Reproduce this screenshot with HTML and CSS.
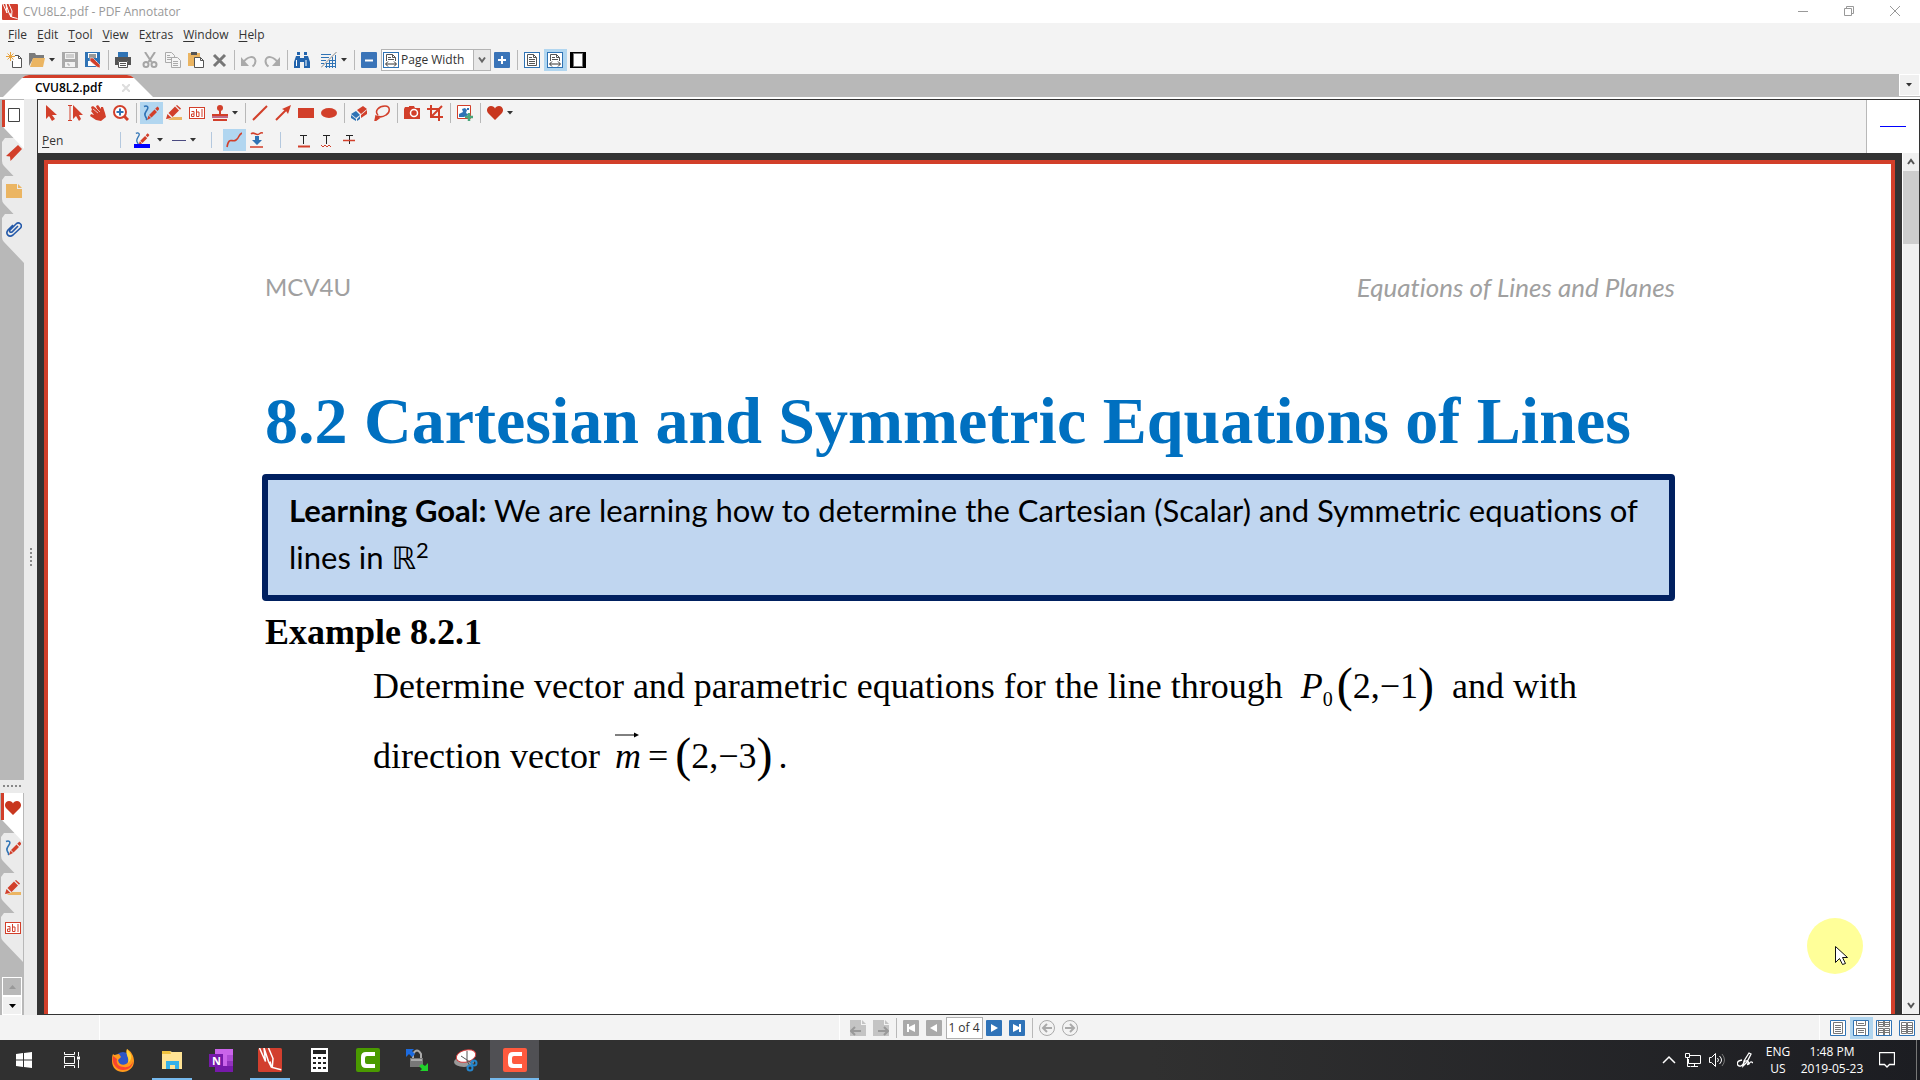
FILE: index.html
```html
<!DOCTYPE html>
<html lang="en">
<head>
    <meta charset="UTF-8">
    <meta name="viewport" content="width=device-width, initial-scale=1.0">
    <title>CVU8L2.pdf - PDF Annotator</title>
    <link rel="stylesheet" href="styles.css">
</head>
<body>

    <!-- Shared icons -->
    <svg class="sprite" aria-hidden="true">
        <symbol id="i-pen" viewBox="0 0 16 16">
            <path d="M1 1.500C4 0 6 2 4 5S1 9 2.500 11.500S4 14 3 15" fill="none" stroke="#2f73b5" stroke-width="1.500"/>
            <path d="M4 15l1.500-4.500 2.500 2.500z M6 10l5.500-5.500 2.500 2.500-5.500 5.500z M12.200 3.800l2.300-2.300 2 2-2 2.500z" fill="#d23f2a"/>
        </symbol>
        <symbol id="i-marker" viewBox="0 0 16 16">
            <path d="M7 12h9v3H2z" fill="#ebb562"/>
            <path d="M0 14l1.500-5 4 4z M2.500 8l6.500-6.500 4 4L6.500 12z M10 .8l1-.8 4 3.500-1 1.300z" fill="#d23f2a"/>
        </symbol>
        <symbol id="i-text" viewBox="0 0 16 16">
            <rect x=".5" y="2.500" width="15" height="11" fill="#fff" stroke="#d23f2a"/>
            <path d="M2.500 6.500h2.500v5h-2.500v-2.500h2.500M7.500 4v7.500h2.500v-4.500h-2.500M13 4v8" fill="none" stroke="#d23f2a"/>
        </symbol>
        <symbol id="i-heart" viewBox="0 0 16 16">
            <path d="M8 15L1 8C-1.500 4.500 1 1 4 1c2 0 3.500 1 4 2.500C8.500 2 10 1 12 1c3 0 5.500 3.500 3 7z" fill="#c8371f"/>
        </symbol>
        <symbol id="i-width" viewBox="0 0 16 16">
            <rect x=".5" y=".5" width="15" height="15" fill="#fff" stroke="#2f73b5"/>
            <path d="M3.500 9V2.500h6l3 3V9M9.500 2.500v3h3M5 5.500h3M5 7.500h6" fill="none" stroke="#555"/>
            <path d="M3 12h10M5 9.500L2.500 12 5 14.500M11 9.500l2.500 2.500-2.500 2.500" fill="none" stroke="#333"/>
        </symbol>
        <symbol id="i-caret" viewBox="0 0 7 4">
            <path d="M0 0h6L3 3.500z" fill="#333"/>
        </symbol>
        <symbol id="i-pdf" viewBox="0 0 16 16">
            <rect width="16" height="16" rx="1" fill="#d23f2e"/>
            <path d="M1 0l4 9L4 0l3 9 2 4-1-4M7 0l3 7-.5 6 6 1.500" fill="none" stroke="#fff" stroke-width="1"/>
        </symbol>
        <symbol id="i-camtasia" viewBox="0 0 24 24">
            <path d="M19 4h-9q-5 0-5 5v6q0 5 5 5h9v-4h-8q-2 0-2-2v-4q0-2 2-2h8z" fill="#fff"/>
        </symbol>
        <symbol id="i-tab" viewBox="0 0 24 50">
            <path d="M2 4L5 0H24V49L4 28Q2 26 2 23Z"/>
        </symbol>
    </svg>

    <header class="title-bar">
        <svg class="icon"><use href="#i-pdf"/></svg>
        <span class="title-text">CVU8L2.pdf - PDF Annotator</span>
        <button class="window-button" aria-label="Minimize"><svg class="icon-small" viewBox="0 0 10 10"><path d="M0 5.500h10"/></svg></button>
        <button class="window-button" aria-label="Restore"><svg class="icon-small" viewBox="0 0 10 10"><path d="M.5 2.500h7v7h-7zM2.500 2.500v-2h7v7h-2"/></svg></button>
        <button class="window-button" aria-label="Close"><svg class="icon-small" viewBox="0 0 10 10"><path d="M0 0l10 10M10 0L0 10"/></svg></button>
    </header>

    <nav class="menu-bar">
        <button><u>F</u>ile</button>
        <button><u>E</u>dit</button>
        <button><u>T</u>ool</button>
        <button><u>V</u>iew</button>
        <button>E<u>x</u>tras</button>
        <button><u>W</u>indow</button>
        <button><u>H</u>elp</button>
    </nav>

    <div class="toolbar main-toolbar">
        <button class="tool" aria-label="New"><svg class="icon" viewBox="0 0 16 16"><path d="M6.500 9v6.500h9v-9l-3-3H9M12.500 3.500v3h3" fill="#fff" stroke="#555"/><path d="M4.500 0v9M0 4.500h9M1.500 1.500l6 6M7.500 1.500l-6 6" stroke="#e8a33d"/></svg></button>
        <button class="tool" aria-label="Open"><svg class="icon" viewBox="0 0 16 16"><path d="M0 14V1h6l1 2h8v4H4z" fill="#7b7b7b"/><path d="M4 6h12l-2 9H1z" fill="#ebb562"/></svg></button>
        <button class="caret" aria-label="Open recent"><svg><use href="#i-caret"/></svg></button>
        <button class="tool" aria-label="Save"><svg class="icon" viewBox="0 0 16 16"><path d="M0 0h16v16H0z" fill="#aaa"/><path d="M3 1h10v6H3zM3 10h10v5H3z" fill="#f3f3f3"/><path d="M4 3h8M4 5h8M5 12h2v2" stroke="#aaa" fill="none"/></svg></button>
        <button class="tool" aria-label="Save annotations"><svg class="icon" viewBox="0 0 16 16"><path d="M0 0h15v15H0z" fill="#2f73b5"/><path d="M3 1h9v5H3zM3 9h9v5H3z" fill="#fff"/><path d="M4 3h7M4 5h7" stroke="#333"/><path d="M5 6l3 0 7 7v3l-3-1-7-6z" fill="#d23f2a" stroke="#fff" stroke-width=".5"/></svg></button>
        <span class="separator"></span>
        <button class="tool" aria-label="Print"><svg class="icon" viewBox="0 0 16 16"><path d="M3 0h10v5H3z" fill="#2f73b5"/><path d="M0 5h16v8h-3V9H3v4H0z" fill="#555"/><path d="M3.500 9.500h9v6h-9zM5 11.500h6M5 13.500h6" fill="#fff" stroke="#555"/></svg></button>
        <span class="spacer"></span>
        <button class="tool" aria-label="Cut"><svg class="icon" viewBox="0 0 16 16" fill="none" stroke="#a5a5a5" stroke-width="2"><path d="M3 0l6.500 10M13 0L6.500 10"/><circle cx="4" cy="12.500" r="2.500"/><circle cx="12" cy="12.500" r="2.500"/></svg></button>
        <button class="tool" aria-label="Copy"><svg class="icon" viewBox="0 0 16 16" fill="#f5f5f5" stroke="#aaa"><path d="M.5.5h6l3 3v7h-9zM2 3.500h3M2 5.500h5M2 7.500h5"/><path d="M6.500 5.500h6l3 3v7h-9zM8 9.500h5M8 11.500h5M8 13.500h5"/></svg></button>
        <button class="tool" aria-label="Paste"><svg class="icon" viewBox="0 0 16 16"><path d="M0 1h12v13H0z" fill="#ebb562"/><path d="M3 0h6v3H3z" fill="#555"/><path d="M6.500 5.500h6l3 3v7h-9zM12.500 5.500v3h3" fill="#fff" stroke="#555"/></svg></button>
        <button class="tool" aria-label="Delete"><svg class="icon" viewBox="0 0 16 16"><path d="M3 3l11 11M14 3L3 14" stroke="#777" stroke-width="3"/></svg></button>
        <span class="separator"></span>
        <button class="tool" aria-label="Undo"><svg class="icon" viewBox="0 0 16 16"><path d="M2 11C6 4 14 3 14.500 9c0 2-1 4-3 5.500" fill="none" stroke="#aaa" stroke-width="2"/><path d="M0 5v9h8z" fill="#aaa"/></svg></button>
        <button class="tool" aria-label="Redo"><svg class="icon" viewBox="0 0 16 16"><path d="M14 11C10 4 2 3 1.500 9c0 2 1 4 3 5.500" fill="none" stroke="#aaa" stroke-width="2"/><path d="M16 5v9H8z" fill="#aaa"/></svg></button>
        <span class="separator"></span>
        <button class="tool" aria-label="Find"><svg class="icon" viewBox="0 0 16 16" fill="#2264ad"><path d="M3 0h3v3H3zM10 0h3v3h-3zM2 4h4v2h4V4h4l2 6v6h-6v-6H6v6H0v-6z"/><path d="M2.500 8v6M12 8v6" stroke="#fff"/></svg></button>
        <span class="spacer"></span>
        <button class="tool" aria-label="Page background"><svg class="icon" viewBox="0 0 16 16"><path d="M0 2.500h10M0 5.500h8M0 8.500h5M0 11.500h3M4 14.500h11M6 11.500h9M9 8.500h6M5.500 11v5M8.500 8v8M11.500 5v11M14.500 3v13" stroke="#2f73b5"/><path d="M0 15.500L15.500 0" stroke="#888"/></svg></button>
        <button class="caret" aria-label="Background options"><svg><use href="#i-caret"/></svg></button>
        <span class="separator"></span>
        <button class="tool" aria-label="Zoom out"><svg class="icon" viewBox="0 0 16 16"><rect width="16" height="16" rx="1" fill="#3a74b8"/><path d="M4 8.500h8" stroke="#fff" stroke-width="2"/></svg></button>
        <div class="zoom-box">
            <svg class="icon"><use href="#i-width"/></svg>
            <select aria-label="Zoom"><option>Page Width</option></select>
            <svg class="zoom-arrow" viewBox="0 0 16 20"><path d="M5 7.500l3 4 3-4" fill="none" stroke="#666" stroke-width="2"/></svg>
        </div>
        <button class="tool" aria-label="Zoom in"><svg class="icon" viewBox="0 0 16 16"><rect width="16" height="16" rx="1" fill="#3a74b8"/><path d="M4 8h8M8 4v8" stroke="#fff" stroke-width="2"/></svg></button>
        <span class="separator"></span>
        <button class="tool" aria-label="Full page"><svg class="icon" viewBox="0 0 16 16"><rect x=".5" y=".5" width="15" height="15" fill="#fff" stroke="#2f73b5"/><path d="M3.500 2.500h6l3 3v8h-9zM9.500 2.500v3h3M5 5.500h3M5 7.500h6M5 9.500h6M5 11.500h6" fill="none" stroke="#555"/></svg></button>
        <button class="tool active" aria-label="Page width"><svg class="icon"><use href="#i-width"/></svg></button>
        <button class="tool" aria-label="Full screen"><svg class="icon" viewBox="0 0 16 16"><path d="M0 0h16v16H0z"/><path d="M3.500 1.500h9v13h-9z" fill="#fff" stroke="#777"/></svg></button>
    </div>

    <div class="tab-strip">
        <div class="document-tab">
            <svg class="tab-shape" viewBox="0 0 152 24"><path d="M0 24L20 4Q23 1 27 1H125Q129 1 132 4L152 24z" fill="#fff"/><path d="M20 4Q23 1 27 1H125Q129 1 132 4z" fill="#d23f2a"/></svg>
            <button class="tab-name">CVU8L2.pdf</button>
            <button class="tab-close" aria-label="Close tab"><svg viewBox="0 0 8 8"><path d="M0 0l8 8M8 0L0 8"/></svg></button>
        </div>
        <button class="tab-list" aria-label="Open documents"><svg><use href="#i-caret"/></svg></button>
    </div>

    <div class="workspace">
        <aside class="sidebar">
            <div class="rail panels">
                <button class="side-tab selected" aria-label="Pages"><svg class="side-shape"><use href="#i-tab"/></svg><svg class="icon" viewBox="0 0 16 16"><path d="M2.500 1.500h11v13h-11z" fill="#fff" stroke="#444"/></svg></button>
                <button class="side-tab" aria-label="Bookmarks"><svg class="side-shape"><use href="#i-tab"/></svg><svg class="icon" viewBox="0 0 16 16"><path d="M12 0l4 4L4.500 16l-.500-4.500L0 11z" fill="#d23f2a"/></svg></button>
                <button class="side-tab" aria-label="Annotations"><svg class="side-shape"><use href="#i-tab"/></svg><svg class="icon" viewBox="0 0 16 16"><path d="M0 1h11v5h5v9H0zM12 1l4 4h-4z" fill="#ebb562"/></svg></button>
                <button class="side-tab" aria-label="Attachments"><svg class="side-shape"><use href="#i-tab"/></svg><svg class="icon" viewBox="0 0 16 16"><path d="M12 5L6 11c-2 1-3-1-2-2l6-6c3-3 7 1 4.500 4L7 14c-4 3-8-1-5-5l5-5" fill="none" stroke="#2459a9" stroke-width="1.600"/></svg></button>
            </div>
            <div class="dots"></div>
            <div class="rail toolbox">
                <button class="side-tab selected" aria-label="Favorites"><svg class="side-shape"><use href="#i-tab"/></svg><svg class="icon"><use href="#i-heart"/></svg></button>
                <button class="side-tab" aria-label="Pens"><svg class="side-shape"><use href="#i-tab"/></svg><svg class="icon"><use href="#i-pen"/></svg></button>
                <button class="side-tab" aria-label="Markers"><svg class="side-shape"><use href="#i-tab"/></svg><svg class="icon"><use href="#i-marker"/></svg></button>
                <button class="side-tab" aria-label="Text"><svg class="side-shape"><use href="#i-tab"/></svg><svg class="icon"><use href="#i-text"/></svg></button>
                <div class="rail-scroll">
                    <button class="disabled" aria-label="Scroll up" disabled><svg viewBox="0 0 7 4"><path d="M0 4h7L3.500 0z" fill="#999"/></svg></button>
                    <button aria-label="Scroll down"><svg viewBox="0 0 7 4"><path d="M0 0h7L3.500 4z"/></svg></button>
                </div>
            </div>
            <div class="splitter"></div>
        </aside>

        <main class="editor">
            <div class="annotation-bar">
                <div class="annotation-rows">
                    <div class="toolbar">
                        <button class="tool" aria-label="Select"><svg class="icon" viewBox="0 0 16 16"><path d="M2 0v14l3-3 3 5 3-2-3-4h5z" fill="#d23f2a"/></svg></button>
                        <button class="tool" aria-label="Select text"><svg class="icon" viewBox="0 0 16 16"><path d="M6 0v14l3-3 3 5 2-2-2-4h4z" fill="#d23f2a"/><path d="M1 .5h4M3 0v16M1 15.500h4" stroke="#d23f2a" fill="none"/></svg></button>
                        <button class="tool" aria-label="Pan"><svg class="icon" viewBox="0 0 16 16"><path d="M1 2l2-1 4 3-1-3 2-1 3 4V2l2 0 2 6 1 4-5 4-5-1-6-4 1-2 3 1-3-4 1-1z" fill="#d23f2a"/><path d="M3 4l5 4M6 3l4 4" stroke="#f3f3f3" stroke-width=".7"/></svg></button>
                        <button class="tool" aria-label="Zoom"><svg class="icon" viewBox="0 0 16 16"><circle cx="7" cy="7" r="6" fill="#fff" stroke="#d23f2a" stroke-width="2"/><path d="M11 11l4 4" stroke="#d23f2a" stroke-width="3"/><path d="M3.500 7h7M7 3.500v7" stroke="#2f73b5" stroke-width="2"/></svg></button>
                        <span class="separator"></span>
                        <button class="tool active" aria-label="Pen"><svg class="icon"><use href="#i-pen"/></svg></button>
                        <button class="tool" aria-label="Marker"><svg class="icon"><use href="#i-marker"/></svg></button>
                        <button class="tool" aria-label="Text"><svg class="icon"><use href="#i-text"/></svg></button>
                        <button class="tool" aria-label="Stamp"><svg class="icon" viewBox="0 0 16 16"><circle cx="8" cy="3" r="3" fill="#d23f2a"/><path d="M7 5h2v4h7v3H0V9h7z" fill="#d23f2a"/><path d="M0 11h16v2H0z" fill="#c26a86"/><path d="M1 14h14v2H1z" fill="#d23f2a"/></svg></button>
                        <button class="caret" aria-label="Stamps"><svg><use href="#i-caret"/></svg></button>
                        <span class="separator"></span>
                        <button class="tool" aria-label="Line"><svg class="icon" viewBox="0 0 16 16"><path d="M1 15L15 1" stroke="#d23f2a" stroke-width="2"/></svg></button>
                        <button class="tool" aria-label="Arrow"><svg class="icon" viewBox="0 0 16 16"><path d="M1 15L12 4" stroke="#d23f2a" stroke-width="2"/><path d="M16 0l-3 9-2-3-4-2z" fill="#d23f2a"/></svg></button>
                        <button class="tool" aria-label="Rectangle"><svg class="icon" viewBox="0 0 16 16"><path d="M0 3h16v10H0z" fill="#d23f2a"/></svg></button>
                        <button class="tool" aria-label="Ellipse"><svg class="icon" viewBox="0 0 16 16"><ellipse cx="8" cy="8" rx="8" ry="5" fill="#d23f2a"/></svg></button>
                        <span class="separator"></span>
                        <button class="tool" aria-label="Eraser"><svg class="icon" viewBox="0 0 16 16"><path d="M0 9l5-3 4 4-4 3zM0 10l5 4v2l-5-3zM6 14l3-3v3l-3 2z" fill="#2f73b5"/><path d="M6 5l6-4 4 3-6 5zM10 10l6-5v4l-6 4z" fill="#d23f2a"/></svg></button>
                        <button class="tool" aria-label="Lasso"><svg class="icon" viewBox="0 0 16 16" fill="none" stroke="#d23f2a" stroke-width="1.500"><path d="M4 10C0 6 5 1 11 1c6 0 5 7 1 9-3 2-7 2-9 1"/><path d="M1 16l1-5 3 2z" fill="#d23f2a"/></svg></button>
                        <span class="separator"></span>
                        <button class="tool" aria-label="Snapshot"><svg class="icon" viewBox="0 0 16 16"><path d="M0 4l1-2h4V1h5l1 2h5v11H0z" fill="#d23f2a"/><circle cx="10" cy="8" r="3.500" fill="#d23f2a" stroke="#fff" stroke-width="1.500"/></svg></button>
                        <button class="tool" aria-label="Crop"><svg class="icon" viewBox="0 0 16 16"><path d="M0 4h12v12M4 0v12h12M5 11L15 1" fill="none" stroke="#d23f2a" stroke-width="2"/></svg></button>
                        <span class="separator"></span>
                        <button class="tool" aria-label="Insert image"><svg class="icon" viewBox="0 0 16 16"><path d="M.5.5h13v13H.5z" fill="#fff" stroke="#d23f2a"/><path d="M2 12V9l4-2-1-3 3-1 2 2-1 3 3 2-5 2zM10 3h2v2h-2z" fill="#2f73b5"/><path d="M8 12h8M12 8v8" stroke="#4aa67c" stroke-width="2.500"/></svg></button>
                        <span class="separator"></span>
                        <button class="tool" aria-label="Favorites"><svg class="icon"><use href="#i-heart"/></svg></button>
                        <button class="caret" aria-label="Favorite tools"><svg><use href="#i-caret"/></svg></button>
                    </div>
                    <div class="toolbar options">
                        <span class="tool-name"><u>P</u>en</span>
                        <span class="separator blue"></span>
                        <button class="tool color" aria-label="Color"><svg class="icon" viewBox="0 0 16 16"><use href="#i-pen" width="16" height="14"/><path d="M0 12h16v4H0z" fill="#00f"/></svg></button>
                        <button class="caret" aria-label="Colors"><svg><use href="#i-caret"/></svg></button>
                        <button class="tool" aria-label="Line width"><svg class="icon" viewBox="0 0 16 16"><path d="M2 8.500h14" stroke="#4a4a80"/></svg></button>
                        <button class="caret" aria-label="Line widths"><svg><use href="#i-caret"/></svg></button>
                        <span class="separator blue wide"></span>
                        <button class="tool active" aria-label="Smooth"><svg class="icon" viewBox="0 0 16 16"><path d="M1 15C3 4 6 11 10 8s2-5 6-7" fill="none" stroke="#d23f2a" stroke-width="1.600"/></svg></button>
                        <button class="tool" aria-label="Pressure"><svg class="icon" viewBox="0 0 16 16"><path d="M2 2c3-3 5 2 8 0s3-1 4-1M1 15h13" fill="none" stroke="#d23f2a" stroke-width="1.500"/><path d="M6 4h4v4h3l-5 5-5-5h3z" fill="#2f73b5"/></svg></button>
                        <span class="separator blue wide"></span>
                        <button class="tool" aria-label="Underline"><svg class="icon" viewBox="0 0 16 16"><path d="M5 3.500h7M8.500 3v9" stroke="#222"/><path d="M3 14.500h12" stroke="#d23f2a" stroke-width="2"/></svg></button>
                        <button class="tool" aria-label="Squiggly"><svg class="icon" viewBox="0 0 16 16"><path d="M5 3.500h7M8.500 3v9" stroke="#222"/><path d="M3 13l2 2 2-2 2 2 2-2 2 2" fill="none" stroke="#d23f2a"/></svg></button>
                        <button class="tool" aria-label="Strike out"><svg class="icon" viewBox="0 0 16 16"><path d="M5 3.500h7M8.500 3v9" stroke="#222"/><path d="M2 8.500h12" stroke="#d23f2a" stroke-width="1.500"/></svg></button>
                    </div>
                </div>
                <div class="preview"><span></span></div>
            </div>

            <div class="viewer">
                <div class="canvas">
                    <article class="page">
                        <div class="page-header"><span>MCV4U</span><em>Equations of Lines and Planes</em></div>
                        <h1>8.2 Cartesian and Symmetric Equations of Lines</h1>
                        <p class="goal"><b>Learning Goal:</b> We are learning how to determine the Cartesian (Scalar) and Symmetric equations of<br>lines in <span class="reals">ℝ</span><sup>2</sup></p>
                        <h2>Example 8.2.1</h2>
                        <p class="question">Determine vector and parametric equations for the line through <span class="math"><i>P</i><sub>0</sub><span class="paren">(</span>2,−1<span class="paren">)</span></span> and with<br>direction vector <span class="math"><i class="vector">m<svg viewBox="0 0 24 6"><path d="M0 3h20" stroke="#000"/><path d="M24 3l-5-2.500v5z"/></svg></i><span class="equals">=</span><span class="paren">(</span>2,−3<span class="paren">)</span></span>.</p>
                    </article>
                </div>
                <div class="scrollbar">
                    <svg viewBox="0 0 16 16"><path d="M5 10l3-4 3 4"/></svg>
                    <div class="thumb"></div>
                    <svg viewBox="0 0 16 16"><path d="M5 6l3 4 3-4"/></svg>
                </div>
            </div>
        </main>
    </div>

    <footer class="status-bar">
        <div class="status-left"></div>
        <div class="toolbar page-nav">
            <button class="tool" aria-label="Previous annotated page"><svg class="icon" viewBox="0 0 16 16"><path d="M0 0h11v5h5v11H0zM12 0l4 4h-4z" fill="#c4c4c4"/><path d="M11 11H2M5 7l-4 4 4 4" fill="none" stroke="#999" stroke-width="2"/></svg></button>
            <button class="tool" aria-label="Next annotated page"><svg class="icon" viewBox="0 0 16 16"><path d="M0 0h11v5h5v11H0zM12 0l4 4h-4z" fill="#c4c4c4"/><path d="M5 11h9M11 7l4 4-4 4" fill="none" stroke="#999" stroke-width="2"/></svg></button>
            <span class="separator"></span>
            <button class="tool" aria-label="First page"><svg class="icon" viewBox="0 0 16 16"><rect width="16" height="16" rx="1" fill="#aaa"/><path d="M4 4h2v3l6-3v8L6 9v3H4z" fill="#fff"/></svg></button>
            <button class="tool" aria-label="Previous page"><svg class="icon" viewBox="0 0 16 16"><rect width="16" height="16" rx="1" fill="#aaa"/><path d="M4 8l7-4v8z" fill="#fff"/></svg></button>
            <input class="page-number" type="text" value="1 of 4" aria-label="Page">
            <button class="tool" aria-label="Next page"><svg class="icon" viewBox="0 0 16 16"><rect width="16" height="16" rx="1" fill="#2f73b8"/><path d="M5 4l7 4-7 4z" fill="#fff"/></svg></button>
            <button class="tool" aria-label="Last page"><svg class="icon" viewBox="0 0 16 16"><rect width="16" height="16" rx="1" fill="#2f73b8"/><path d="M4 4l6 3V4h2v8h-2V9l-6 3z" fill="#fff"/></svg></button>
            <span class="separator"></span>
            <button class="tool" aria-label="Back"><svg class="icon" viewBox="0 0 16 16" fill="none" stroke="#aaa"><circle cx="8" cy="8" r="7.500"/><path d="M13 8H4M8 4L4 8l4 4" stroke-width="2"/></svg></button>
            <button class="tool" aria-label="Forward"><svg class="icon" viewBox="0 0 16 16" fill="none" stroke="#aaa"><circle cx="8" cy="8" r="7.500"/><path d="M3 8h9M8 4l4 4-4 4" stroke-width="2"/></svg></button>
        </div>
        <div class="toolbar page-layout">
            <button class="tool" aria-label="Single page"><svg class="icon layout-icon" viewBox="0 0 16 16"><path d="M.5.500h15v15H.5z" class="frame"/><path d="M3.500 2.500h9v11h-9zM5 5.500h6M5 7.500h6M5 9.500h6M5 11.500h6"/></svg></button>
            <button class="tool active" aria-label="Continuous"><svg class="icon layout-icon" viewBox="0 0 16 16"><path d="M.5.500h15v15H.5z" class="frame"/><path d="M3.500 1v4.500h9V1M5 3.500h6M3.500 15V8.500h9V15M5 10.500h6M5 12.500h6"/></svg></button>
            <button class="tool" aria-label="Two pages continuous"><svg class="icon layout-icon" viewBox="0 0 16 16"><path d="M.5.500h15v15H.5z" class="frame"/><path d="M2.500 1v5.500h5V1M8.500 1v5.500h5V1M3 2.500h10M3 4.500h10M2.500 15V8.500h5V15M8.500 15V8.500h5V15M3 10.500h10M3 12.500h10"/></svg></button>
            <button class="tool" aria-label="Two pages"><svg class="icon layout-icon" viewBox="0 0 16 16"><path d="M.5.500h15v15H.5z" class="frame"/><path d="M2.500 2.500h5v11h-5zM8.500 2.500h5v11h-5zM3 5.500h10M3 7.500h10M3 9.500h10M3 11.500h10"/></svg></button>
        </div>
    </footer>

    <div class="taskbar">
        <button class="task system" aria-label="Start"><svg class="icon" viewBox="0 0 16 16"><path d="M0 2l7-1v6.500H0zM8 1l8-1v7.500H8zM0 8.500h7V15l-7-1zM8 8.500h8V16l-8-1z" fill="#fff"/></svg></button>
        <button class="task system" aria-label="Task View"><svg class="icon" viewBox="0 0 16 16" fill="none" stroke="#fff"><path d="M.5 0v2.500h10V0M.5 4.500h10v7H.5zM.5 16v-2.500h10V16M14.500 0v4M14.500 8v8"/><path d="M13 6h3" stroke-width="3"/></svg></button>
        <button class="task" aria-label="Firefox"><svg class="app-icon" viewBox="0 0 24 24"><circle cx="12" cy="13" r="9" fill="#2d57c8"/><path d="M2 6c2 2 3 0 6 0l2 3-3 3c1 6 8 6 10 2 2-5-3-7-1-13 4 2 7 7 7 12 0 14-22 15-22 0 0-3 0-5 1-7z" fill="#ff9a1c"/><path d="M2 8c-2 8 4 14 10 14 7 0 10-5 10-9-1 4-5 7-9 6C7 19 5 15 6 11z" fill="#f8452f"/><path d="M16 1c-2 6 3 9 1 14 4-3 4-8 2-10z" fill="#ffd33d"/></svg></button>
        <button class="task running" aria-label="File Explorer"><svg class="app-icon" viewBox="0 0 24 24"><path d="M2 3h8l2 1h10v17H2z" fill="#ffe394"/><path d="M2 3h8l1 3H2z" fill="#efc23f"/><path d="M6 21v-8h13v8h-4v-4h-5v4z" fill="#35b1e8"/></svg></button>
        <button class="task" aria-label="OneNote"><svg class="app-icon" viewBox="0 0 24 24"><path d="M6 1h18v23H6z" fill="#ca64ea"/><path d="M18 7h6v6h-6z" fill="#ae4bd5"/><path d="M18 13h6v5h-6z" fill="#9332bf"/><path d="M6 18h18v6H6z" fill="#7719aa"/><path d="M0 6h14v13H0z" fill="#7719aa"/><text x="3" y="17" class="note-letter">N</text></svg></button>
        <button class="task running" aria-label="PDF Annotator"><svg class="app-icon"><use href="#i-pdf"/></svg></button>
        <button class="task" aria-label="Calculator"><svg class="app-icon" viewBox="0 0 24 24"><path d="M4 0h17v24H4z" fill="#fff"/><path d="M6 2h13v4H6zM6 9h3v2H6zM11 9h3v2h-3zM16 9h3v2h-3zM6 14h3v2H6zM11 14h3v2h-3zM16 14h3v2h-3zM6 19h3v2H6zM11 19h3v2h-3zM16 19h3v2h-3z" fill="#222"/></svg></button>
        <button class="task" aria-label="Camtasia"><svg class="app-icon" viewBox="0 0 24 24"><rect width="24" height="24" rx="2" fill="#4a9a00"/><use href="#i-camtasia" width="24" height="24"/></svg></button>
        <button class="task" aria-label="Remote access"><svg class="app-icon" viewBox="0 0 24 24"><path d="M8 10V6q4-7 8 0v4" fill="none" stroke="#aaa" stroke-width="2"/><path d="M5 10h13v9H5z" fill="#777"/><path d="M6 11h11v2H6z" fill="#aaa"/><path d="M1 1h8L7 3l3 3-3 3-3-3-3 3z" fill="#1c6be0"/><path d="M23 23h-8l2-2-3-3 3-2 3 2 3-3z" fill="#20d32b"/></svg></button>
        <button class="task" aria-label="Snipping Tool"><svg class="app-icon" viewBox="0 0 24 24"><ellipse cx="10" cy="14" rx="10" ry="5" fill="#999"/><ellipse cx="12" cy="8" rx="10" ry="6" fill="#fff" stroke="#d33c3c" transform="rotate(-15 12 8)"/><path d="M7 8l12 8M13 3v10l3 5" fill="none" stroke="#555"/><circle cx="20" cy="15" r="2.500" fill="none" stroke="#2586cd" stroke-width="2"/><circle cx="16" cy="20" r="2.500" fill="none" stroke="#2586cd" stroke-width="2"/></svg></button>
        <button class="task running focused" aria-label="Camtasia Recorder"><svg class="app-icon" viewBox="0 0 24 24"><rect width="24" height="24" rx="2" fill="#ff5a3e"/><use href="#i-camtasia" width="24" height="24"/></svg></button>
        <div class="tray">
            <button aria-label="Show hidden icons"><svg class="icon" viewBox="0 0 16 16"><path d="M2 11l6-6 6 6" stroke-width="1.500"/></svg></button>
            <button aria-label="Network"><svg class="icon" viewBox="0 0 16 16"><path d="M5 3.500h10.500v8H3.500V7M6 14.500h7M9.500 12v2M.5 1.500h4v4h-4zM2.500 6v8.500h3"/></svg></button>
            <button aria-label="Volume"><svg class="icon" viewBox="0 0 16 16"><path d="M.5 5.500h2l4-4v13l-4-4h-2zM8.500 6q2 2 0 4M10.500 4q4 4 0 8"/><path d="M13 2q5 6 0 12" stroke="#777"/></svg></button>
            <button class="ink" aria-label="Ink workspace"><svg class="icon" viewBox="0 0 16 16"><path d="M6 14l1-5 5-8 2 1-4 8zM5 8c-7 1-5 7-1 6 4-2 2-6 6-5s-2 5 2 3c1-2 2-3 4-1" stroke-width="1.300"/></svg></button>
            <button class="tray-text language">ENG<br>US</button>
            <button class="tray-text clock">1:48 PM<br>2019-05-23</button>
            <button aria-label="Notifications"><svg class="icon" viewBox="0 0 16 16"><path d="M.5.500h15v12h-5L8 15l-2.500-2.500h-5z" stroke-width="1.300"/></svg></button>
        </div>
    </div>

    <!-- Highlighted mouse pointer -->
    <svg class="pointer" viewBox="0 0 58 58"><circle cx="29" cy="29" r="28" fill="#ffff99"/><path d="M29.500 29.500v16l4-4 3 6 3-1-3-6h5z" fill="#fff" stroke="#111"/></svg>

</body>
</html>
```
FILE: styles.css
```css
* {
    box-sizing: border-box;
}
body {
    margin: 0;
    height: 100vh;
    display: flex;
    flex-direction: column;
    overflow: hidden;
    background-color: #f3f3f3;
    color: #333;
    font-family: "Open Sans", "Noto Sans", sans-serif;
    font-size: 12px;
}
button, select, input {
    margin: 0;
    padding: 0;
    border: none;
    background: none;
    color: inherit;
    font: inherit;
}
svg {
    display: block;
    flex: none;
}
.sprite {
    position: absolute;
    width: 0;
    height: 0;
}
.icon {
    width: 16px;
    height: 16px;
}

/* Title and menu */
.title-bar {
    display: flex;
    align-items: center;
    height: 23px;
    padding: 0 2px;
    background-color: #fff;
    color: #999;
}
.title-text {
    flex: 1;
    padding-left: 5px;
}
.window-button {
    display: flex;
    justify-content: center;
    width: 46px;
    padding-bottom: 2px;
}
.icon-small {
    width: 10px;
    height: 10px;
    fill: none;
    stroke: #999;
}
.menu-bar {
    display: flex;
    align-items: center;
    height: 24px;
    padding: 0 0 2px 3px;
}
.menu-bar button {
    padding: 0 5px;
}
u {
    text-underline-offset: 2px;
}

/* Toolbars */
.toolbar {
    display: flex;
    align-items: center;
}
.main-toolbar {
    height: 27px;
    padding: 0 0 2px 3px;
}
.tool {
    width: 23px;
    height: 22px;
    padding-left: 3px;
}
.tool.active {
    background-color: #b1d6f0;
}
.caret {
    width: 10px;
    height: 22px;
}
.caret svg {
    width: 7px;
    height: 4px;
}
.separator {
    width: 1px;
    height: 20px;
    margin: 0 3px;
    background-color: #b8b8b8;
}
.separator.blue {
    height: 16px;
    background-color: #b4c8de;
}
.separator.wide {
    margin: 0 11px;
}
.spacer {
    width: 4px;
}
.zoom-box {
    display: flex;
    align-items: center;
    width: 110px;
    height: 22px;
    padding-left: 1px;
    border: 1px solid #b4b4b4;
    background-color: #fff;
}
.zoom-box select {
    flex: 1;
    min-width: 0;
    padding-left: 2px;
    appearance: none;
}
.zoom-arrow {
    width: 17px;
    height: 20px;
    border-left: 1px solid #b4b4b4;
    background-color: #e8e8e8;
}

/* Document tabs */
.tab-strip {
    display: flex;
    justify-content: space-between;
    height: 25px;
    border-bottom: 2px solid #fff;
    background-color: #b8b8b8;
}
.document-tab {
    position: relative;
    display: flex;
    align-items: center;
    width: 152px;
    height: 24px;
    margin-left: 2px;
    padding: 3px 0 0 33px;
}
.tab-shape {
    position: absolute;
    left: 0;
    top: 0;
    width: 152px;
    height: 24px;
}
.tab-name {
    position: relative;
    flex: 1;
    color: #000;
    font-weight: 600;
    text-align: left;
}
.tab-close {
    position: relative;
    width: 32px;
}
.tab-close svg {
    width: 8px;
    height: 8px;
    stroke: #ddd;
    stroke-width: 2;
}
.tab-list {
    display: flex;
    align-items: center;
    justify-content: center;
    width: 21px;
    height: 22px;
    border: 1px solid #fff;
    background-color: #f0f0f0;
}
.tab-list svg {
    width: 7px;
    height: 4px;
}

/* Side panels */
.workspace {
    display: flex;
    flex: 1;
    min-height: 0;
}
.sidebar {
    position: relative;
    display: flex;
    flex-direction: column;
    width: 37px;
    background-color: #ebebeb;
}
.rail {
    display: flex;
    flex-direction: column;
    width: 24px;
    background-color: #b8b8b8;
}
.panels {
    flex: 1;
    padding-top: 1px;
}
.side-tab {
    position: relative;
    display: flex;
    align-items: center;
    height: 38px;
    padding: 0 0 8px 6px;
}
.toolbox .side-tab {
    height: 40px;
    padding: 0 0 10px 5px;
}
.side-shape {
    position: absolute;
    left: 0;
    top: 0;
    width: 24px;
    height: 50px;
    fill: #ebebeb;
}
.toolbox .side-shape {
    left: -2px;
    width: 26px;
}
.side-tab .icon {
    position: relative;
}
.selected {
    z-index: 1;
}
.selected .side-shape {
    fill: #fff;
}
.selected::before {
    content: "";
    position: absolute;
    z-index: 1;
    left: 2px;
    top: 0;
    width: 3px;
    height: 27px;
    background-color: #d23f2a;
}
.toolbox .selected::before {
    left: 1px;
}
.dots {
    width: 19px;
    height: 13px;
    margin-left: 3px;
    background: repeating-linear-gradient(90deg, #888 0 2px, transparent 2px 4px) 0 5px / 19px 2px no-repeat;
}
.rail-scroll {
    margin: 24px 2px 0;
}
.rail-scroll button {
    display: flex;
    align-items: center;
    justify-content: center;
    width: 20px;
    height: 19px;
    border: 1px solid #fff;
    background-color: #f0f0f0;
}
.rail-scroll .disabled {
    background-color: #b8b8b8;
}
.rail-scroll svg {
    width: 7px;
    height: 4px;
}
.splitter {
    position: absolute;
    left: 30px;
    top: 49%;
    width: 2px;
    height: 18px;
    background: repeating-linear-gradient(#888 0 2px, transparent 2px 4px);
}

/* Editor */
.editor {
    display: flex;
    flex: 1;
    flex-direction: column;
    min-width: 0;
    border: 1px solid #333;
}
.annotation-bar {
    display: flex;
    height: 53px;
    background-color: #f3f3f3;
}
.annotation-rows {
    flex: 1;
    padding: 2px 0 0 3px;
}
.options {
    margin-top: 5px;
}
.tool-name {
    width: 76px;
    padding-left: 1px;
}
.color {
    margin-left: 7px;
    width: 26px;
}
.preview {
    display: flex;
    align-items: center;
    justify-content: center;
    width: 53px;
    border-left: 1px solid #b8b8b8;
    background-color: #fff;
}
.preview span {
    width: 26px;
    height: 1px;
    background-color: #00f;
}
.viewer {
    display: flex;
    flex: 1;
    min-height: 0;
}
.canvas {
    flex: 1;
    overflow: hidden;
    padding: 7px 7px 0 6px;
    background-color: #333;
}
.scrollbar {
    display: flex;
    flex-direction: column;
    width: 17px;
    border-left: 1px solid #fff;
    background-color: #f0f0f0;
}
.scrollbar svg {
    width: 16px;
    height: 18px;
    fill: none;
    stroke: #555;
    stroke-width: 2;
}
.scrollbar svg:last-child {
    margin-top: auto;
}
.thumb {
    height: 73px;
    background-color: #cdcdcd;
}

/* Document page */
.page {
    min-height: 100%;
    padding: 108px 216px 0 217px;
    border: solid #d23f2a;
    border-width: 4px 4px 0;
    background-color: #fff;
    color: #000;
    font-family: "Liberation Serif", "Times New Roman", serif;
    font-size: 36px;
}
.page-header {
    display: flex;
    justify-content: space-between;
    color: #a0a0a0;
    font-family: Lato, Calibri, sans-serif;
    font-size: 24px;
    font-variant-ligatures: none;
    line-height: 30px;
}
.page-header em {
    font-size: 26px;
}
.page h1 {
    margin: 79px 0 13px;
    color: #0070c0;
    font-size: 66px;
    line-height: 80px;
    white-space: nowrap;
}
.goal {
    margin: 0 0 12px -3px;
    padding: 7px 20px 13px 21px;
    border: 6px solid #002060;
    border-radius: 4px;
    background-color: #c0d6f0;
    font-family: Lato, Calibri, sans-serif;
    font-size: 31px;
    font-variant-ligatures: none;
    line-height: 47px;
    white-space: nowrap;
}
.reals {
    font-family: "DejaVu Sans", sans-serif;
}
.goal sup {
    font-size: 22px;
    line-height: 0;
}
.page h2 {
    margin: 0;
    font-size: 36px;
    line-height: 38px;
}
.question {
    margin: 0 0 0 108px;
    line-height: 70px;
    white-space: nowrap;
}
.math {
    margin: 0 9px;
}
.math:last-child {
    margin: 0 6px;
}
.math sub {
    margin-right: 4px;
    font-size: 20px;
    line-height: 0;
}
.equals {
    margin: 0 7px;
}
.paren {
    font-size: 48px;
    line-height: 0;
    vertical-align: -3px;
}
.vector {
    position: relative;
}
.vector svg {
    position: absolute;
    left: 0;
    top: -4px;
    width: 24px;
    height: 6px;
}

/* Status bar */
.status-bar {
    display: grid;
    grid-template-columns: 1fr auto 1fr;
    height: 25px;
}
.status-left {
    width: 100px;
    border-right: 1px solid #fff;
}
.page-nav, .page-layout {
    padding-left: 7px;
    border-left: 1px solid #fff;
}
.page-layout {
    justify-self: end;
    padding-right: 1px;
}
.page-number {
    width: 37px;
    height: 22px;
    border: 1px solid #b0b0b0;
    background-color: #fff;
    text-align: center;
}
.layout-icon {
    fill: none;
    stroke: #777;
}
.layout-icon .frame {
    fill: #fff;
    stroke: #2f73b5;
}

/* Taskbar */
.taskbar {
    display: flex;
    height: 40px;
    background: linear-gradient(90deg, #303030 0, #303030 60%, #1c1d22);
    color: #fff;
}
.task {
    display: flex;
    align-items: center;
    justify-content: center;
    width: 49px;
}
.system {
    width: 48px;
}
.system + .system {
    margin-right: 2px;
}
.app-icon {
    width: 24px;
    height: 24px;
}
.running {
    background: linear-gradient(#76b9ed, #76b9ed) bottom / 40px 2px no-repeat;
}
.focused {
    background-color: #505054;
    background-size: 100% 2px;
}
.note-letter {
    fill: #fff;
    font-family: "Open Sans", sans-serif;
    font-size: 11px;
    font-weight: 700;
}
.tray {
    display: flex;
    align-items: center;
    margin: 0 3px 0 auto;
    padding-right: 17px;
    border-right: 1px solid #777;
}
.tray button {
    display: flex;
    justify-content: center;
    width: 24px;
}
.tray svg {
    fill: none;
    stroke: #fff;
}
.tray .ink {
    margin: 0 8px 0 4px;
}
.tray .tray-text {
    display: block;
    width: 26px;
    line-height: 17px;
    text-align: center;
    white-space: nowrap;
}
.tray .clock {
    width: 66px;
    margin: 0 10px 0 8px;
}

.pointer {
    position: fixed;
    right: 56px;
    bottom: 105px;
    width: 58px;
    height: 58px;
}
```
